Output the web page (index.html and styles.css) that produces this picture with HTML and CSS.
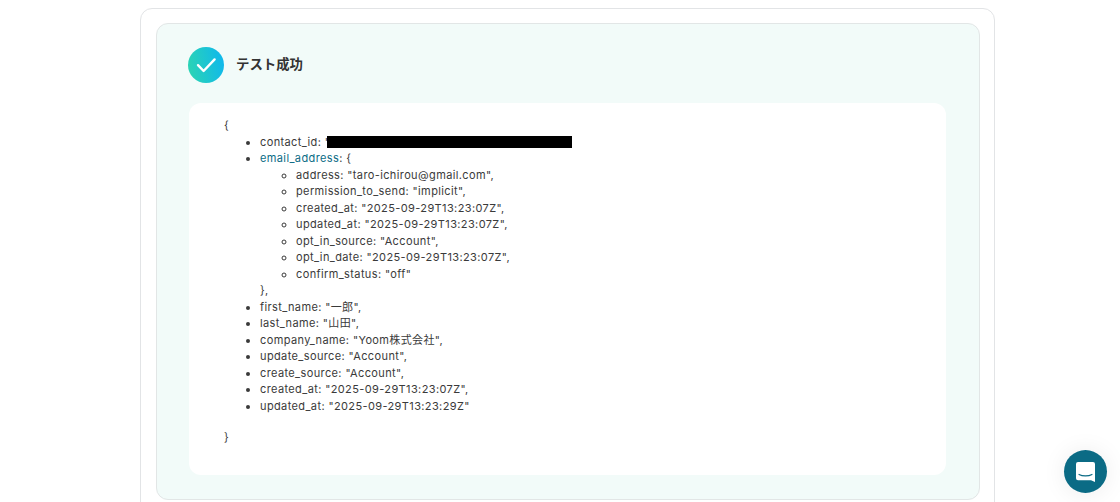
FILE: index.html
```html
<!DOCTYPE html>
<html lang="ja">
<head>
<meta charset="utf-8">
<title>テスト成功</title>
<link rel="stylesheet" href="styles.css">
</head>
<body>
<main class="outer">
  <section class="panel">
    <header class="status">
      <svg class="status-icon" width="36" height="36" viewBox="0 0 36 36" aria-hidden="true">
        <defs>
          <linearGradient id="g" x1="0" y1="0.6" x2="1" y2="0.4">
            <stop offset="0" stop-color="#2bd4b4"/>
            <stop offset="1" stop-color="#10b8ec"/>
          </linearGradient>
        </defs>
        <circle cx="18" cy="18" r="18" fill="url(#g)"/>
        <path d="M10 18.2 L15.6 24 L26.6 12.4" fill="none" stroke="#fff" stroke-width="2.4" stroke-linecap="round" stroke-linejoin="round"/>
      </svg>
      <h2 class="status-title">テスト成功</h2>
    </header>
    <div class="result">
      <p class="brace">{</p>
      <ul class="items">
        <li>contact_id: "<span class="redact"></span></li>
        <li><span class="key-link">email_address</span>: {
          <ul class="sub">
            <li>address: "taro-ichirou@gmail.com",</li>
            <li>permission_to_send: "implicit",</li>
            <li>created_at: "2025-09-29T13:23:07Z",</li>
            <li>updated_at: "2025-09-29T13:23:07Z",</li>
            <li>opt_in_source: "Account",</li>
            <li>opt_in_date: "2025-09-29T13:23:07Z",</li>
            <li>confirm_status: "off"</li>
          </ul>
          },
        </li>
        <li>first_name: "一郎",</li>
        <li>last_name: "山田",</li>
        <li>company_name: "Yoom株式会社",</li>
        <li>update_source: "Account",</li>
        <li>create_source: "Account",</li>
        <li>created_at: "2025-09-29T13:23:07Z",</li>
        <li>updated_at: "2025-09-29T13:23:29Z"</li>
      </ul>
      <p class="brace">}</p>
    </div>
  </section>
</main>
<button class="chat" type="button" aria-label="チャット">
  <svg width="19" height="20" viewBox="0 0 19 20" aria-hidden="true">
    <path d="M2 0 H17 A2 2 0 0 1 19 2 V20 L15 18.2 H2 A2 2 0 0 1 0 16.2 V2 A2 2 0 0 1 2 0 Z" fill="#fff"/>
    <path d="M3 12.4 C6.5 14.4 12.5 14.4 16 12.4" fill="none" stroke="#0b6b85" stroke-width="1.1" stroke-linecap="round"/>
  </svg>
</button>
</body>
</html>
```
FILE: styles.css
```css
html, body {
  margin: 0;
  height: 502px;
  overflow: hidden;
  background: #fff;
}
body {
  font-family: Inter, "Noto Sans CJK JP", sans-serif;
  color: #3a3a3a;
  position: relative;
}
.outer {
  box-sizing: border-box;
  width: 855px;
  margin: 8px 0 0 140px;
  padding: 14px 14px 14px 15px;
  border: 1px solid #e2e4e6;
  border-radius: 12px;
}
.panel {
  box-sizing: border-box;
  height: 477px;
  padding: 23px 33px 24px 32px;
  background: #f2fbf9;
  border: 1px solid #e2e6e6;
  border-radius: 12px;
}
.status {
  display: flex;
  align-items: center;
  gap: 12px;
  height: 36px;
  margin: 0 0 20px -1px;
}
.status-icon {
  flex: none;
}
.status-title {
  margin: 0;
  padding-bottom: 2px;
  font-size: 13.4px;
  font-weight: 600;
  line-height: 20px;
  color: #333;
}
.result {
  box-sizing: border-box;
  height: 372px;
  padding: 14.3px 35px 14px;
  background: #fff;
  border-radius: 12px;
  font-size: 11px;
  line-height: 16.5px;
  letter-spacing: 0.38px;
}
.brace {
  margin: 0;
}
.items {
  margin: 0 0 14.7px;
  padding: 0 0 0 36px;
  list-style: disc;
}
.sub {
  margin: 0;
  padding: 0 0 0 36px;
  list-style: circle;
}
.key-link {
  color: #0b6b85;
}
.redact {
  display: inline-block;
  width: 245px;
  height: 12px;
  margin-left: -3px;
  background: #000;
  vertical-align: -2px;
}
.chat {
  position: absolute;
  left: 1064px;
  top: 450px;
  width: 43px;
  height: 43px;
  display: flex;
  align-items: center;
  justify-content: center;
  padding: 0;
  border: 0;
  border-radius: 50%;
  background: #0b6b85;
  box-shadow: 0 1px 24px rgba(0, 0, 0, 0.08);
}
```
